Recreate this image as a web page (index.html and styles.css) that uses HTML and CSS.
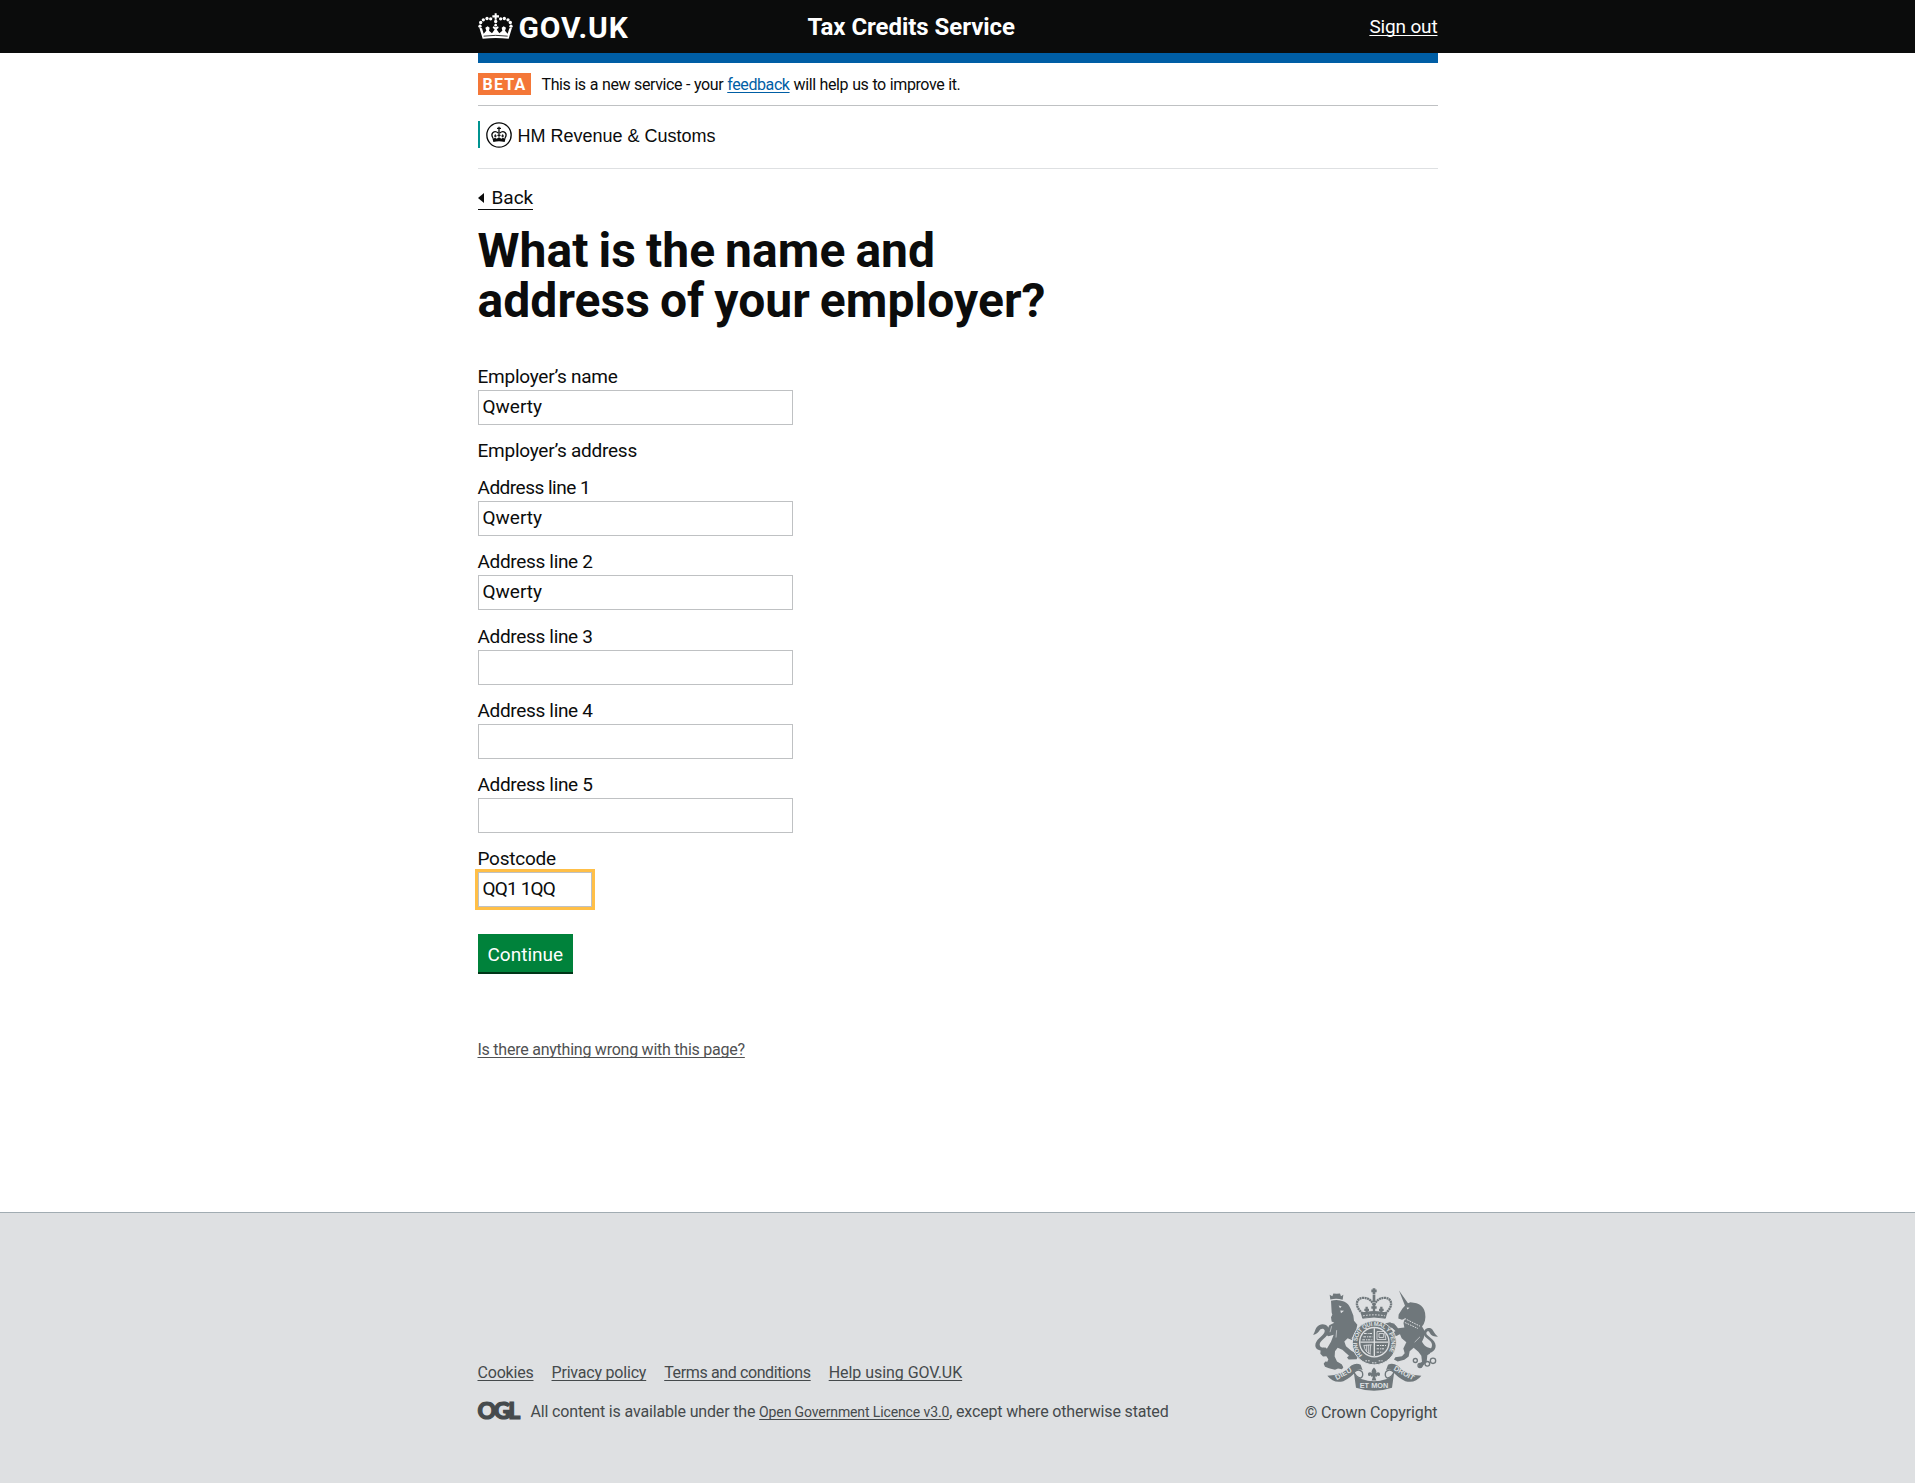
FILE: index.html
```html
<!DOCTYPE html>
<html lang="en">
<head>
<meta charset="utf-8">
<title>What is the name and address of your employer?</title>
<link rel="stylesheet" href="styles.css">
</head>
<body>
<header class="header">
  <div class="container header-inner">
    <a class="brand" href="#">
      <svg class="brand-crown" viewBox="24 38 105 77" aria-hidden="true">
        <g fill="currentColor">
          <path d="M74 38h6v6h7v7h-7v7h-6v-7h-7v-7h7z"/>
          <circle cx="62" cy="55" r="5"/><circle cx="51" cy="54" r="5"/><circle cx="40" cy="58" r="5"/><circle cx="32" cy="66" r="5"/><circle cx="30" cy="77" r="5"/>
          <circle cx="92" cy="55" r="5"/><circle cx="103" cy="54" r="5"/><circle cx="114" cy="58" r="5"/><circle cx="121" cy="66" r="5"/><circle cx="123" cy="77" r="5"/>
          <circle cx="77" cy="63" r="5"/><circle cx="77" cy="74" r="4"/>
          <path d="M28 82l8 1 5 17 8-9-3-9 7-5 6 5-2 9 9 7 8-11-6-5 2-5 7 3 7-3 2 5-6 5 8 11 9-7-2-9 6-5 7 5-3 9 8 9 5-17 8-1-10 33q-39-5-78 0z"/>
        </g>
        <path d="M41 107q36-5 72 0" fill="none" stroke="#0b0c0c" stroke-width="2.5"/>
      </svg>
      <span class="brand-name">GOV.UK</span>
    </a>
    <span class="service-name">Tax Credits Service</span>
    <a class="sign-out" href="#">Sign out</a>
  </div>
</header>

<main class="container main">
  <div class="phase-banner">
    <strong class="phase-tag">BETA</strong>
    <span class="phase-text">This is a new service - your <a href="#">feedback</a> will help us to improve it.</span>
  </div>

  <div class="organisation">
    <div class="organisation-logo">
      <svg class="organisation-crest" viewBox="48 35 78 78" aria-hidden="true">
        <circle cx="87" cy="74" r="36.500" fill="none" stroke="currentColor" stroke-width="4"/>
        <g fill="none" stroke="currentColor" stroke-width="4">
          <path d="M69 83c-9-14 4-25 16-15M105 83c9-14-4-25-16-15"/>
          <path d="M87 49v30M81 54h12"/>
          <path d="M76 72v9M98 72v9M72 77h8M94 77h8M82 75h10" stroke-width="3"/>
        </g>
        <path d="M67 82q4 3 8 0l5 3 7-4 7 4 5-3q4 3 8 0l-3 13q-17-4-34 0z" fill="currentColor"/>
      </svg>
      <span class="organisation-name">HM Revenue &amp; Customs</span>
    </div>
  </div>

  <a class="back-link" href="#"><span class="back-arrow"></span>Back</a>

  <h1 class="heading">What is the name and<br>address of your employer?</h1>

  <form class="form">
    <div class="field">
      <label for="name">Employer’s name</label>
      <input id="name" type="text" value="Qwerty">
    </div>
    <p class="legend">Employer’s address</p>
    <div class="field">
      <label class="numbered-one" for="line1">Address line 1</label>
      <input id="line1" type="text" value="Qwerty">
    </div>
    <div class="field">
      <label for="line2">Address line 2</label>
      <input id="line2" type="text" value="Qwerty">
    </div>
    <div class="field">
      <label for="line3">Address line 3</label>
      <input id="line3" type="text">
    </div>
    <div class="field">
      <label for="line4">Address line 4</label>
      <input id="line4" type="text">
    </div>
    <div class="field">
      <label for="line5">Address line 5</label>
      <input id="line5" type="text">
    </div>
    <div class="field">
      <label for="postcode">Postcode</label>
      <input id="postcode" class="input-postcode is-focused" type="text" value="QQ1 1QQ">
    </div>
    <button class="button" type="button">Continue</button>
  </form>

  <a class="report-link" href="#">Is there anything wrong with this page?</a>
</main>

<footer class="footer">
  <div class="container footer-inner">
    <div class="footer-meta">
      <nav class="footer-links">
        <a class="link-cookies" href="#">Cookies</a>
        <a class="link-privacy" href="#">Privacy policy</a>
        <a class="link-terms" href="#">Terms and conditions</a>
        <a class="link-help" href="#">Help using GOV.UK</a>
      </nav>
      <div class="licence">
        <span class="ogl">OGL</span>
        <span class="licence-text">All content is available under the <a href="#">Open Government Licence v3.0</a>, except where otherwise stated</span>
      </div>
    </div>
    <div class="copyright">
      <svg class="crest" viewBox="69 54 375 308" aria-hidden="true">
        <g fill="none" stroke="#6f777b">
          <!-- crown -->
          <path d="M218 130c-28-24-18-47 2-47 16 0 26 9 31 22M286 130c28-24 18-47-2-47-16 0-26 9-31 22" stroke-width="7" stroke-dasharray="6 1.500"/>
          <path d="M252 54v18M244 62h16M252 74v22" stroke-width="8"/>
          <path d="M252 102v26M244 112h16M230 110v18M223 119h14M274 110v18M267 119h14" stroke-width="7"/>
          <path d="M214 128q38-8 76 0l-4 16q-34-7-68 0z" fill="#6f777b" stroke-width="3"/>
          <path d="M219 137q33-6 66 0" stroke="#dee0e2" stroke-width="3" stroke-dasharray="5 4"/>
        </g>
        <g fill="#6f777b">
          <!-- lion -->
          <path d="M121 88l-2-14 8 4 3-8 10 1 10-1 3 8 7-4-2 15q-18-6-37-1z"/>
          <path d="M123 92q19-6 39 2 14 6 20 22l8 20 2 16 10 12-5 22-12 18 2 6-14-6-10 10 5 14 16 14 14 8 6 8-4 9-24 1-5-6 6-5-20-18-14-6-8 10-1 16 7 15 14 8 5 9-4 6-12-2-9 4-18-5-12-4-4-9 5-7 6 1 3-8-6-9-10 1-8-8 1-13 9-6 10 3 12-20 8-21-15 4-9-4 4-14 7-15 15-7-8-4-2-13 4-7-2-7z"/>
          <!-- lion tail -->
          <path d="M108 240c-24 6-40-9-28-27 8-12 26-20 24-32-2-8-13-7-17 2-6 7-10 9-18 11 7-8 6-23 18-29 17-9 32 4 30 18-3 18-28 26-28 40 0 9 9 11 19 9z"/>
          <!-- unicorn -->
          <path d="M327 61l27 38 7-3 10 2q18 1 28 15 10 14 6 38-3 12-9 18 8 9 8 22-2 16-8 24 8 14 16 16l12 4-4 15-8 5-2 20-16 18-9-3 2-9 9-6-2-18-9-12-14-12-12 10-3 16-13 10-20 5-11-6 4-7 20-3 8-9-4-14 9-19-14-12-5-12-17 7-4 12-11-6 2-13 17-9-12-11-13 3-9-7 2-8 15-4 17 9 7 9 19-2-3-16 6-11-10 4-11-4 1-12 12-19 7-7z"/>
          <!-- unicorn tail -->
          <path d="M394 240c16 6 32 0 32-16 0-16-25-20-25-35 0-13 16-21 26-11 4 6 7 13 17 22-11 0-21-3-25-12-2-6-9-6-10 1 0 9 28 18 28 38 0 20-25 29-45 18z"/>
        </g>
        <!-- faces, mane and collar highlights -->
        <path d="M146 106l9 3-5 5zM151 121l11 1-9 7zM350 112l9 1-7 5z" fill="#dee0e2"/>
        <g fill="none" stroke="#dee0e2" stroke-width="2">
          <path d="M344 145l46 23M338 154l46 21" stroke-width="3" stroke-dasharray="5 3"/>
          <path d="M125 168l-5 18M140 180l-2 22M390 200l-16 16"/>
        </g>
        <g fill="none" stroke="#6f777b" stroke-width="4">
          <circle cx="376" cy="271" r="6"/><circle cx="390" cy="286" r="6"/><circle cx="412" cy="281" r="7"/><circle cx="429" cy="272" r="8"/><circle cx="318" cy="190" r="5"/><circle cx="308" cy="166" r="5"/>
        </g>
        <!-- shield and garter -->
        <circle cx="253" cy="218" r="66" fill="#6f777b" stroke="#dee0e2" stroke-width="3"/>
        <circle cx="253" cy="216" r="44" fill="#6f777b" stroke="#dee0e2" stroke-width="4"/>
        <g fill="none" stroke="#dee0e2">
          <path d="M253 174v84M211 216h84" stroke-width="4"/>
          <path d="M222 190h26M220 200h28M217 209h30" stroke-width="3" stroke-dasharray="8 3 3 2"/>
          <path d="M261 184l22 0 5 24h-27zM267 190h14v12h-14z" stroke-width="2.500"/>
          <path d="M222 226q2 20 20 26M230 224v20M236 224v26M242 224l-2 28M221 226l24-2" stroke-width="2.500"/>
          <path d="M260 226h28M260 236h25M260 246h17" stroke-width="3" stroke-dasharray="7 3 3 2"/>
        </g>
        <path id="garter" d="M217.500 254.600a51 51 0 1 1 71 0" fill="none"/>
        <text class="motto"><textPath href="#garter" textLength="228">HONI SOIT QUI MAL Y PENSE</textPath></text>
        <path d="M226 272h14M246 278h14M266 272h12" stroke="#dee0e2" stroke-width="3" stroke-dasharray="5 3"/>
        <!-- ribbon -->
        <g fill="#6f777b">
          <path d="M112 317q46-2 72-31 15-9 28-2l6 16q-13-7-20 4-16 19-38 29-29 8-48-16z"/>
          <path d="M394 317q-46-2-72-31-15-9-28-2l-6 16q13-7 20 4 16 19 38 29 29 8 48-16z"/>
          <path d="M192 310q14 22 60 23 46-1 60-23l-6 43q-54 18-108 0z"/>
        </g>
        <path d="M192 306q14-13 25 0 4 12-5 18-15-5-20-18zM312 306q-14-13-25 0-4 12 5 18 15-5 20-18z" fill="#dee0e2" stroke="#6f777b" stroke-width="4"/>
        <path d="M231 292h42v38q-21 5-42 0z" fill="#dee0e2"/>
        <path d="M252 292c-13 14-5 18-3 23-4-12-16-10-15-2 1 6 6 5 8 2 1 5 4 5 7 4l-4 12h14l-4-12c3 1 6 1 7-4 2 3 7 4 8-2 1-8-11-10-15 2 2-5 10-9-3-23z" fill="#6f777b"/>
        <text class="ribbon-text" transform="translate(140 330) rotate(-29)" textLength="54">DIEU</text>
        <text class="ribbon-text" x="209" y="355" textLength="86">ET MON</text>
        <text class="ribbon-text" transform="translate(310 299) rotate(29)" textLength="66">DROIT</text>
      </svg>
      <span class="copyright-text">© Crown Copyright</span>
    </div>
  </div>
</footer>
</body>
</html>
```
FILE: styles.css
```css
* { box-sizing: border-box; }

body {
  margin: 0;
  min-height: 100vh;
  display: flex;
  flex-direction: column;
  background: #fff;
  color: #0b0c0c;
  font-family: Roboto, "Liberation Sans", sans-serif;
  font-size: 19px;
}

a {
  color: inherit;
  text-decoration: underline;
  text-decoration-thickness: 1px;
  text-underline-offset: 2px;
  text-decoration-skip-ink: none;
}

.container {
  width: 960px;
  margin: 0 auto;
}

/* Header */
.header {
  background: #0b0c0c;
  color: #fff;
}

.header-inner {
  display: grid;
  grid-template-columns: 330px 1fr auto;
  height: 53px;
  line-height: 53px;
}

.brand {
  display: flex;
  align-items: center;
  gap: 6px;
  height: 51px;
  text-decoration: none;
}

.brand-crown {
  width: 35px;
  height: 26px;
}

.brand-name {
  padding-top: 3px;
  font-size: 30px;
  font-weight: 700;
  letter-spacing: 0.9px;
}

.service-name {
  padding-top: 1px;
  font-size: 24px;
  font-weight: 700;
  letter-spacing: -0.05px;
}

.sign-out {
  letter-spacing: -0.15px;
}

/* Page body */
.main {
  display: flex;
  flex-direction: column;
  align-items: flex-start;
  border-top: 10px solid #005ea5;
}

.phase-banner {
  display: flex;
  align-self: stretch;
  gap: 11px;
  padding: 10px 0;
  border-bottom: 1px solid #bfc1c3;
  font-size: 16px;
  line-height: 22px;
}

.phase-tag {
  height: 22px;
  padding: 1px 4px 0 5px;
  background: #f47738;
  color: #fff;
  line-height: 22px;
  letter-spacing: 1.2px;
}

.phase-text {
  height: 22px;
  padding-top: 1px;
  letter-spacing: -0.4px;
  word-spacing: 0.4px;
}

.phase-text a {
  color: #005ea5;
}

.organisation {
  align-self: stretch;
  padding: 15px 0 20px;
  border-bottom: 1px solid #dee0e2;
}

.organisation-logo {
  display: flex;
  align-items: center;
  gap: 6px;
  height: 27px;
  padding-left: 6px;
  border-left: 2px solid #009390;
}

.organisation-crest {
  width: 26px;
  height: 26px;
}

.organisation-name {
  padding-top: 3px;
  font-family: "Liberation Sans", Arial, sans-serif;
  font-size: 18px;
  line-height: 27px;
}

.back-link {
  display: flex;
  align-items: center;
  gap: 8px;
  margin-top: 17px;
  border-bottom: 1px solid #0b0c0c;
  line-height: 23px;
  text-decoration: none;
}

.back-arrow {
  border: solid transparent;
  border-width: 5px 6px 5px 0;
  border-right-color: #0b0c0c;
}

.heading {
  margin: 16px 0 38px;
  font-size: 48px;
  font-weight: 700;
  line-height: 50px;
  letter-spacing: 0.05px;
  word-spacing: -2px;
}

.field,
.legend {
  margin: 0 0 13.25px;
}

.field label,
.legend {
  display: block;
  height: 26px;
  line-height: 25px;
  letter-spacing: -0.25px;
}

.legend {
  margin-bottom: 10.75px;
}

.field label[for^="line"] {
  letter-spacing: -0.33px;
}

.field .numbered-one[for] {
  letter-spacing: -0.5px;
}

.field input {
  display: block;
  width: 315px;
  height: 35px;
  padding: 3px 4px 6px;
  border: 1px solid #bfc1c3;
  background: #fff;
  color: #0b0c0c;
  font: inherit;
  line-height: 24px;
}

.field .input-postcode {
  width: 114px;
  letter-spacing: -0.85px;
}

.is-focused {
  outline: 3px solid #ffbf47;
}

.button {
  display: block;
  height: 38px;
  margin-top: 27px;
  padding: 2px 10px 0;
  border: 0;
  background: #00823b;
  box-shadow: 0 2px 0 #003618;
  color: #fff;
  font: inherit;
}

.report-link {
  margin-top: 68px;
  color: #505152;
  font-size: 16px;
  line-height: 20px;
  letter-spacing: -0.24px;
}

/* Footer */
.footer {
  height: 271px;
  margin-top: auto;
  border-top: 1px solid #a1acb2;
  background: #dee0e2;
  color: #454a4c;
  font-size: 16px;
  line-height: 20px;
}

.footer-inner {
  display: flex;
  justify-content: space-between;
  align-items: flex-end;
  padding-top: 75px;
}

.footer-meta {
  padding-bottom: 1px;
}

.footer-links {
  display: flex;
  gap: 18px;
  margin-bottom: 19px;
}

.link-cookies,
.link-privacy { letter-spacing: -0.2px; }

.link-terms { letter-spacing: -0.38px; }

.link-help { letter-spacing: -0.05px; }

.licence {
  display: flex;
  gap: 10px;
}

.ogl {
  width: 43px;
  height: 20px;
  font-family: Lato, sans-serif;
  font-size: 23px;
  font-weight: 900;
  line-height: 16px;
  letter-spacing: -2.3px;
  -webkit-text-stroke: 1.2px currentColor;
}

.licence-text {
  letter-spacing: -0.16px;
}

.licence-text a {
  font-size: 14px;
  letter-spacing: -0.12px;
}

.copyright {
  display: flex;
  flex-direction: column;
  align-items: flex-end;
}

.crest {
  width: 125px;
  height: 103px;
  margin-bottom: 12px;
}

.copyright-text {
  letter-spacing: -0.1px;
}

.motto,
.ribbon-text {
  fill: #dee0e2;
  font-family: "Liberation Sans", Arial, sans-serif;
  font-weight: 700;
}

.motto { font-size: 18px; }

.ribbon-text { font-size: 22px; }
```
